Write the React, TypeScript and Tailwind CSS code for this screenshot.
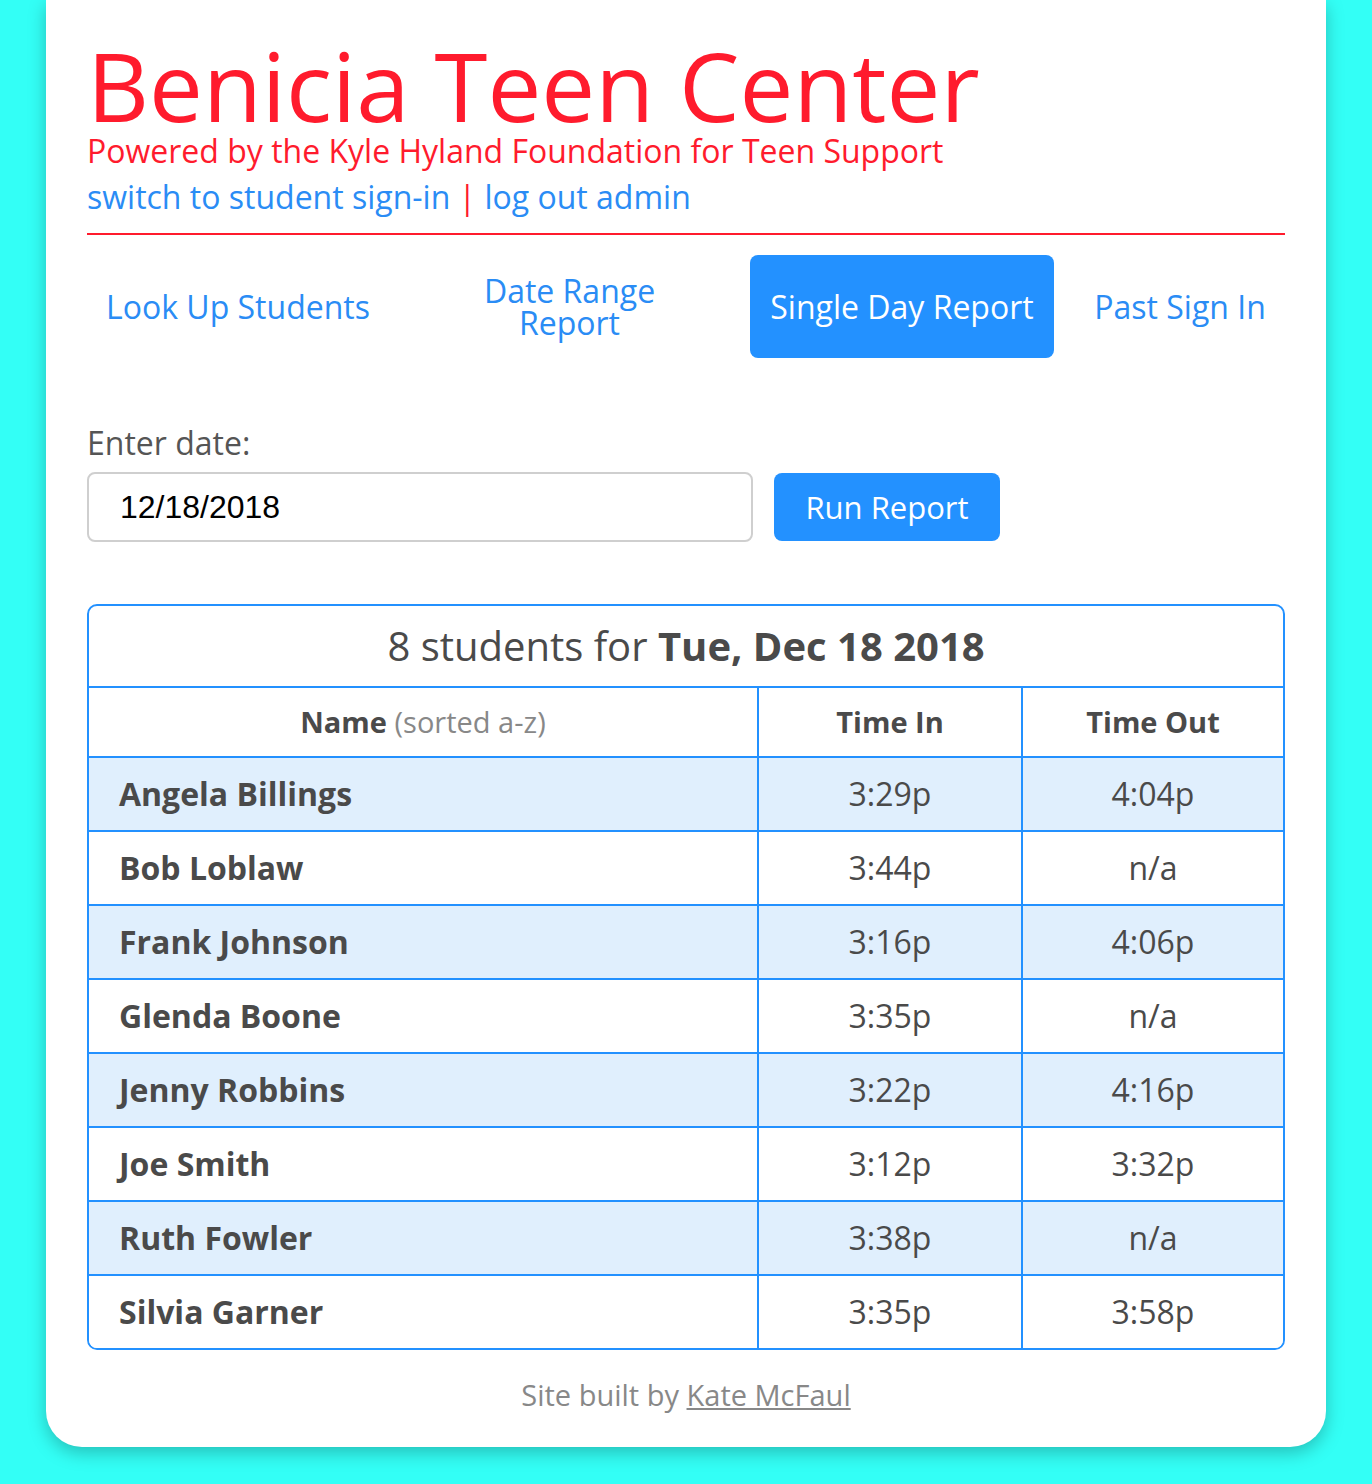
import React from "react";

const rows = [
  { name: "Angela Billings", timeIn: "3:29p", timeOut: "4:04p" },
  { name: "Bob Loblaw", timeIn: "3:44p", timeOut: "n/a" },
  { name: "Frank Johnson", timeIn: "3:16p", timeOut: "4:06p" },
  { name: "Glenda Boone", timeIn: "3:35p", timeOut: "n/a" },
  { name: "Jenny Robbins", timeIn: "3:22p", timeOut: "4:16p" },
  { name: "Joe Smith", timeIn: "3:12p", timeOut: "3:32p" },
  { name: "Ruth Fowler", timeIn: "3:38p", timeOut: "n/a" },
  { name: "Silvia Garner", timeIn: "3:35p", timeOut: "3:58p" },
];

export default function App() {
  return (
    <div
      className="min-h-screen bg-[#33fff6] px-[46px] pb-[38px]"
      style={{ fontFamily: '"Open Sans", "Noto Sans", sans-serif' }}
    >
      <div className="bg-white rounded-b-[36px] shadow-[0_6px_18px_rgba(0,0,0,0.25)] px-[41px] pt-[37px] pb-[38px]">
        {/* header */}
        <h1 className="text-[96px] leading-none text-[#ff1b2d]">Benicia Teen Center</h1>
        <p className="mt-[2px] text-[32px] leading-[32px] text-[#ff1b2d]">Powered by the Kyle Hyland Foundation for Teen Support</p>
        <p className="mt-[14px] text-[32px] leading-[32px] text-[#2a8cf5]">
          <a href="#">switch to student sign-in</a>
          <span className="text-[#ff1b2d]"> | </span>
          <a href="#">log out admin</a>
        </p>
        <div className="mt-[20px] h-[2px] bg-[#ff1b2d]" />

        {/* tabs */}
        <div className="mt-[20px] flex gap-[21px] h-[103px] text-[32px] leading-[32px] text-[#2a8cf5]">
          <button className="w-[302px] rounded-lg whitespace-nowrap">Look Up Students</button>
          <button className="w-[319px] rounded-lg">
            Date Range
            <br />
            Report
          </button>
          <button className="w-[304px] rounded-lg bg-[#2391ff] text-white whitespace-nowrap">Single Day Report</button>
          <button className="flex-1 rounded-lg whitespace-nowrap">Past Sign In</button>
        </div>

        {/* date form */}
        <label className="block mt-[69px] text-[32px] leading-[32px] text-[#555]">Enter date:</label>
        <div className="mt-[13px] flex items-center gap-[21px]">
          <input
            defaultValue="12/18/2018"
            className="w-[666px] h-[70px] rounded-lg border-2 border-[#cfcfcf] px-[31px] text-[32px] text-black outline-none"
            style={{ fontFamily: '"Liberation Sans", Arial, sans-serif' }}
          />
          <button className="w-[226px] h-[68px] rounded-lg bg-[#2391ff] text-white text-[31px]">Run Report</button>
        </div>

        {/* report table */}
        <div className="mt-[62px] border-2 border-[#2391ff] rounded-[10px] overflow-hidden text-[#4a4a4a]">
          <div className="h-[80px] flex items-center justify-center text-[40px]">
            <span>
              8 students for <b className="font-bold">Tue, Dec 18 2018</b>
            </span>
          </div>
          <div className="flex h-[70px] border-t-2 border-[#2391ff] text-[29px]">
            <div className="w-[668px] flex items-center justify-center">
              <span>
                <b>Name</b> <span className="text-[#888]">(sorted a-z)</span>
              </span>
            </div>
            <div className="w-[264px] border-l-2 border-[#2391ff] flex items-center justify-center font-bold">Time In</div>
            <div className="flex-1 border-l-2 border-[#2391ff] flex items-center justify-center font-bold">Time Out</div>
          </div>
          {rows.map((r, i) => (
            <div
              key={r.name}
              className={`flex h-[74px] border-t-2 border-[#2391ff] text-[32px] ${i % 2 === 0 ? "bg-[#e0effd]" : "bg-white"}`}
            >
              <div className="w-[668px] flex items-center pl-[30px] font-bold">{r.name}</div>
              <div className="w-[264px] border-l-2 border-[#2391ff] flex items-center justify-center">{r.timeIn}</div>
              <div className="flex-1 border-l-2 border-[#2391ff] flex items-center justify-center">{r.timeOut}</div>
            </div>
          ))}
        </div>

        <p className="mt-[30px] text-center text-[29px] leading-[29px] text-[#888]">
          Site built by <a href="#" className="underline">Kate McFaul</a>
        </p>
      </div>
    </div>
  );
}
